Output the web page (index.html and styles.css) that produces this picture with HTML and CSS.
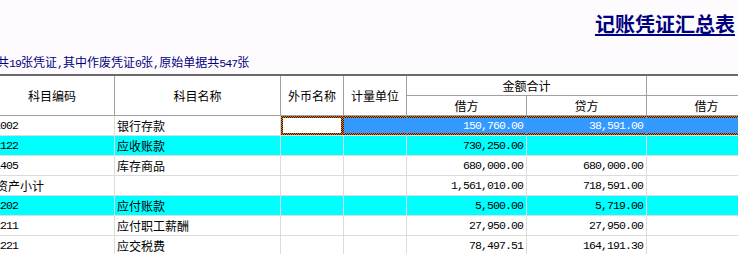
FILE: index.html
```html
<!DOCTYPE html>
<html lang="zh-CN">
<head>
<meta charset="utf-8">
<title>记账凭证汇总表</title>
<link rel="stylesheet" href="styles.css">
</head>
<body>
<div class="page">
  <header class="top">
    <h1 class="title">记账凭证汇总表</h1>
    <p class="sub">共<span class="n">19</span>张凭证<span class="n">,</span>其中作废凭证<span class="n">0</span>张<span class="n">,</span>原始单据共<span class="n">547</span>张</p>
  </header>
  <div class="grid">
    <table>
      <colgroup>
        <col class="c-code"><col class="c-name"><col class="c-cur"><col class="c-unit">
        <col class="c-amt"><col class="c-amt"><col class="c-amt"><col class="c-amt">
      </colgroup>
      <thead>
        <tr>
          <th rowspan="2">科目编码</th>
          <th rowspan="2">科目名称</th>
          <th rowspan="2">外币名称</th>
          <th rowspan="2">计量单位</th>
          <th colspan="2">金额合计</th>
          <th colspan="2"></th>
        </tr>
        <tr>
          <th>借方</th><th>贷方</th><th>借方</th><th>贷方</th>
        </tr>
      </thead>
      <tbody>
        <tr class="sel">
          <td class="code num">1002</td>
          <td class="name">银行存款</td>
          <td class="focus"></td>
          <td class="blue"></td>
          <td class="blue amt">150,760.00</td>
          <td class="blue amt">38,591.00</td>
          <td class="blue"></td>
          <td class="blue"></td>
        </tr>
        <tr class="hl">
          <td class="code num">1122</td>
          <td class="name">应收账款</td>
          <td></td><td></td>
          <td class="amt">730,250.00</td>
          <td class="amt"></td>
          <td></td><td></td>
        </tr>
        <tr>
          <td class="code num">1405</td>
          <td class="name">库存商品</td>
          <td></td><td></td>
          <td class="amt">680,000.00</td>
          <td class="amt">680,000.00</td>
          <td></td><td></td>
        </tr>
        <tr>
          <td class="code sum">资产小计</td>
          <td class="name"></td>
          <td></td><td></td>
          <td class="amt">1,561,010.00</td>
          <td class="amt">718,591.00</td>
          <td></td><td></td>
        </tr>
        <tr class="hl">
          <td class="code num">2202</td>
          <td class="name">应付账款</td>
          <td></td><td></td>
          <td class="amt">5,500.00</td>
          <td class="amt">5,719.00</td>
          <td></td><td></td>
        </tr>
        <tr>
          <td class="code num">2211</td>
          <td class="name">应付职工薪酬</td>
          <td></td><td></td>
          <td class="amt">27,950.00</td>
          <td class="amt">27,950.00</td>
          <td></td><td></td>
        </tr>
        <tr>
          <td class="code num">2221</td>
          <td class="name">应交税费</td>
          <td></td><td></td>
          <td class="amt">78,497.51</td>
          <td class="amt">164,191.30</td>
          <td></td><td></td>
        </tr>
      </tbody>
    </table>
  </div>
</div>
</body>
</html>
```

FILE: styles.css
```css
html, body {
  margin: 0;
  height: 100%;
  overflow: hidden;
  background: #fdfbfd;
}
body {
  font-family: "Noto Sans CJK SC", sans-serif;
  font-size: 12px;
  color: #000;
}
.top {
  height: 74px;
  display: flex;
  flex-direction: column;
}
.title {
  margin: 14px 3px 0 0;
  align-self: flex-end;
  font-size: 20px;
  line-height: 20px;
  font-weight: bold;
  color: #000080;
  text-decoration: underline;
  text-underline-offset: 2px;
}
.sub {
  margin: auto 0 5px -3px;
  font-size: 12px;
  line-height: 12px;
  color: #000080;
}
.n {
  font-family: "Liberation Mono", monospace;
  font-size: 11.5px;
  line-height: 1;
  letter-spacing: -0.9px;
}
.grid {
  overflow: hidden;
}
table {
  margin-left: -10px;
  border-collapse: separate;
  border-spacing: 0;
  table-layout: fixed;
  width: 897px;
  border-top: 2px solid #6a6a6a;
  background: #fff;
}
.c-code { width: 125px; }
.c-name { width: 166px; }
.c-cur { width: 63px; }
.c-unit { width: 63px; }
.c-amt { width: 120px; }
th, td {
  box-sizing: border-box;
  padding: 0;
  font-weight: normal;
  white-space: nowrap;
  overflow: hidden;
}
th {
  height: 20px;
  line-height: 19px;
  text-align: center;
  border-right: 1px solid #a0a0a0;
  border-bottom: 1px solid #a0a0a0;
}
td {
  height: 20px;
  line-height: 19px;
  border-right: 1px solid #dcdcdc;
  border-bottom: 1px solid #dcdcdc;
}
td.code { padding-left: 4px; }
td.code.sum { padding-left: 6px; }
td.name { padding-left: 2px; }
td.num, td.amt {
  font-family: "Liberation Mono", monospace;
  font-size: 11.5px;
  letter-spacing: -0.9px;
}
td.amt {
  text-align: right;
  padding-right: 3px;
}
tr.hl td { background: #00ffff; }
td.focus {
  border-right-color: transparent;
  background:
    linear-gradient(#fff, #fff) 2px 2px / calc(100% - 4px) calc(100% - 4px) no-repeat,
    repeating-conic-gradient(#e07818 0 25%, #2a1a10 0 50%) 0 0 / 2px 2px;
}
td.blue {
  color: #fff;
  border-right-color: #3399ff;
  background:
    linear-gradient(#3399ff, #3399ff) 0 2px / 100% calc(100% - 4px) no-repeat,
    repeating-conic-gradient(#e07818 0 25%, #2a1a10 0 50%) 0 0 / 2px 2px;
}
```
